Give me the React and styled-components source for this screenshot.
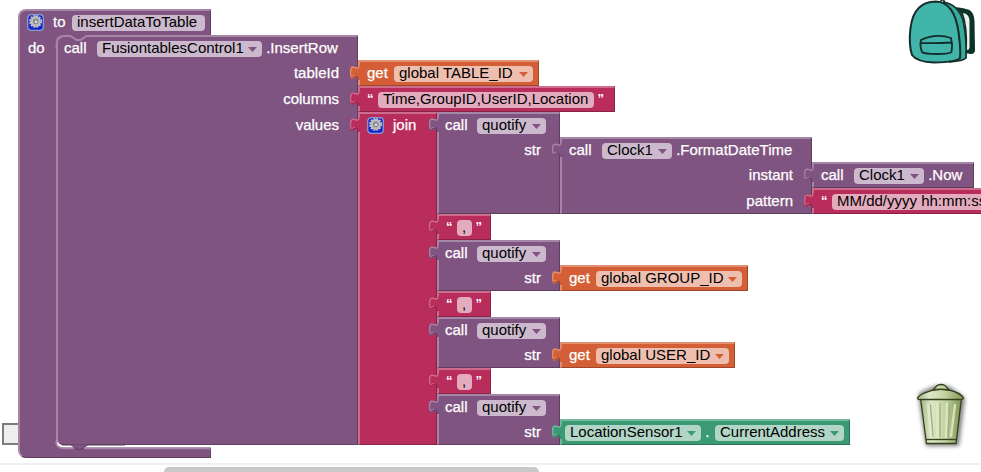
import React from 'react';
import styled, { createGlobalStyle } from 'styled-components';

const Global = createGlobalStyle`
  html, body { margin: 0; background: #fff; overflow: hidden; }
  * { box-sizing: border-box; }
`;

const TONES = {
  purple: { base: '#7f5480', light: '#a686a7', dark: '#5f3f60', pill: '#ccb9cd' },
  pink: { base: '#b82d5b', light: '#cd6c8c', dark: '#8a2244', pill: '#e3abbe' },
  orange: { base: '#d45f36', light: '#e18f72', dark: '#9f4729', pill: '#eebfaf' },
  green: { base: '#3b9974', light: '#76b89e', dark: '#2c7357', pill: '#b1d6c7' },
};

const Workspace = styled.main`
  position: relative;
  width: 981px;
  height: 472px;
  overflow: hidden;
  background: #fff;
  font: 15px/14px "Liberation Sans", Arial, sans-serif;
  color: #fff;
  white-space: pre;
`;

const Procedure = styled.section`
  position: absolute;
  left: 18px;
  top: 9px;
  display: flex;
  flex-direction: column;
`;

const ProcedureHead = styled.header`
  display: flex;
  width: 193px;
  height: 26px;
  padding: 4px 0 0 7px;
  background: ${TONES.purple.base};
  border-top: 2px solid ${TONES.purple.light};
  border-left: 2px solid ${TONES.purple.light};
  border-right: 1px solid ${TONES.purple.dark};
  border-top-left-radius: 8px;
`;

const ProcedureBody = styled.div`
  display: flex;
  height: 411px;
`;

const ProcedureSpine = styled.div`
  width: 38px;
  padding: 6px 0 0 8px;
  background: ${TONES.purple.base};
  border-left: 2px solid ${TONES.purple.light};
`;

const ProcedureFoot = styled.footer`
  width: 193px;
  height: 12px;
  background: ${TONES.purple.base};
  border-left: 2px solid ${TONES.purple.light};
  border-bottom: 1px solid ${TONES.purple.dark};
  border-right: 1px solid ${TONES.purple.dark};
  border-bottom-left-radius: 8px;
`;

const BlockBox = styled.div`
  position: relative;
  display: flex;
  flex-direction: column;
`;

const RowBox = styled.div`
  display: flex;
  flex: none;
  min-height: ${p => p.$height}px;
`;

const Cell = styled.div`
  display: flex;
  flex: none;
  justify-content: ${p => (p.$end ? 'flex-end' : 'flex-start')};
  width: ${p => p.$width}px;
  padding: ${p => (p.$first ? 4 : 6)}px ${p => (p.$end ? 18 : 0)}px 0 ${p => p.$inset || 0}px;
  background: ${p => TONES[p.$tone].base};
  border-left: 2px solid ${p => TONES[p.$tone].light};
  border-right: 1px solid ${p => TONES[p.$tone].dark};
  border-top: ${p => (p.$first ? `2px solid ${TONES[p.$tone].light}` : 'none')};
  border-bottom: ${p => (p.$last ? `1px solid ${TONES[p.$tone].dark}` : 'none')};
  border-top-left-radius: ${p => (p.$round && p.$first ? 8 : 0)}px;
  border-bottom-left-radius: ${p => (p.$round && p.$last ? 6 : 0)}px;
`;

const Inputs = styled.div`
  display: flex;
  flex-direction: column;
`;

const Label = styled.span`
  flex: none;
  width: ${p => (p.$width ? p.$width + 'px' : 'auto')};
  height: 16px;
  -webkit-text-stroke: 0.25px #fff;
`;

const Quote = styled(Label)`
  font-size: 13px;
  font-weight: bold;
  line-height: 13px;
  -webkit-text-stroke: 0;
`;

const Pill = styled.span`
  display: flex;
  flex: none;
  justify-content: space-between;
  width: ${p => p.$width}px;
  height: 16px;
  padding: 0 5px;
  border-radius: 4px;
  background: ${p => TONES[p.$tone].pill};
  color: #000;
`;

const Arrow = styled.svg`
  flex: none;
  width: 9px;
  height: 5px;
  margin-top: 6px;
  fill: ${p => TONES[p.$tone].base};
`;

const TabShape = styled.svg`
  position: absolute;
  left: -9px;
  top: 0;
  width: 12px;
  height: 24px;
`;

const Seam = styled.svg`
  position: absolute;
  left: ${p => p.$x}px;
  top: ${p => p.$y}px;
  width: ${p => p.$w}px;
  height: ${p => p.$h}px;
`;

const GearBox = styled.svg`
  flex: none;
  width: 17px;
  height: 17px;
  margin-top: -1px;
  margin-right: 9px;
`;

const Backpack = styled.svg`
  position: absolute;
  left: 904px;
  top: 0;
  width: 76px;
  height: 66px;
`;

const Trash = styled.svg`
  position: absolute;
  left: 910px;
  top: 376px;
  width: 64px;
  height: 76px;
`;

const FlyoutStub = styled.div`
  position: absolute;
  left: 2px;
  top: 423px;
  width: 24px;
  height: 22px;
  background: #eee;
  border: 2px solid #7c7c7c;
`;

const ScrollTrack = styled.div`
  position: absolute;
  left: 0;
  top: 463px;
  width: 100%;
  height: 9px;
  padding: 2px 0 0 164px;
  border-top: 2px solid #f0f0f0;
`;

const ScrollThumb = styled.div`
  width: 375px;
  height: 12px;
  border-radius: 5px;
  background: #c9c9c9;
`;

function Gear() {
  return (
    <GearBox viewBox="0 0 17 17">
      <rect x="0.7" y="0.7" width="15.6" height="15.6" rx="3.4" fill="#1424c8" stroke="#8e9cd0" strokeWidth="1.3" />
      <circle cx="8.6" cy="7.4" r="5.3" fill="#bcbdbd" />
      <circle cx="8.6" cy="7.4" r="5.7" fill="none" stroke="#c8c9c9" strokeWidth="1.5" strokeDasharray="2 .98" />
      <circle cx="8.8" cy="7.4" r="2.8" fill="#85878c" />
      <circle cx="9" cy="7.8" r="1.4" fill="#dcdce0" />
    </GearBox>
  );
}

function Tab({ tone }) {
  const t = TONES[tone];
  return (
    <TabShape viewBox="-9 0 12 24">
      <path d="M2 5H0C0 15 -8 -3 -8 12.500S0 10 0 20H2Z" fill={t.base} />
      <path d="M.8 4V6C.6 12.500 -7.400 1 -7.400 12.500" fill="none" stroke={t.light} strokeWidth="1.5" />
      <path d="M-7.500 12.500C-7.500 18.500 -5 16 -3 15.200" fill="none" stroke={t.light} strokeWidth="1.2" />
      <path d="M-5.500 17.300C-2.500 16.500 -.3 14 -.1 19.500" fill="none" stroke={t.dark} strokeWidth="1" />
    </TabShape>
  );
}

function Field({ tone, width, menu, children }) {
  return (
    <Pill $tone={tone} $width={width}>
      <span>{children}</span>
      {menu && <Arrow $tone={tone} viewBox="0 0 9 5"><path d="M0 0H9L4.5 5Z" /></Arrow>}
    </Pill>
  );
}

function Text({ value, width, field }) {
  return (
    <BlockBox>
      <RowBox $height={26}>
        <Cell $tone="pink" $first $last $width={width} $inset={7}>
          <Quote $width={11}>“</Quote>
          <Field tone="pink" width={field}>{value}</Field>
          <Quote $width={12}> ”</Quote>
        </Cell>
      </RowBox>
      <Tab tone="pink" />
    </BlockBox>
  );
}

function Getter({ name, width, field }) {
  return (
    <BlockBox>
      <RowBox $height={26}>
        <Cell $tone="orange" $first $last $width={width} $inset={7}>
          <Label $width={27}>get</Label>
          <Field tone="orange" width={field} menu>{name}</Field>
        </Cell>
      </RowBox>
      <Tab tone="orange" />
    </BlockBox>
  );
}

function Quotify({ children }) {
  return (
    <BlockBox>
      <RowBox $height={25}>
        <Cell $tone="purple" $first $width={123} $inset={6}>
          <Label $width={32}>call</Label>
          <Field tone="purple" width={69} menu>quotify</Field>
        </Cell>
      </RowBox>
      <RowBox $height={26}>
        <Cell $tone="purple" $last $end $width={123}><Label>str</Label></Cell>
        {children}
      </RowBox>
      <Tab tone="purple" />
    </BlockBox>
  );
}

function FormatDateTime() {
  return (
    <BlockBox>
      <RowBox $height={25}>
        <Cell $tone="purple" $first $width={252} $inset={7}>
          <Label $width={33}>call</Label>
          <Field tone="purple" width={70} menu>Clock1</Field>
          <Label> .FormatDateTime</Label>
        </Cell>
      </RowBox>
      <RowBox $height={26}>
        <Cell $tone="purple" $end $width={252}><Label>instant</Label></Cell>
        <BlockBox>
          <RowBox $height={26}>
            <Cell $tone="purple" $first $last $width={162} $inset={7}>
              <Label $width={33}>call</Label>
              <Field tone="purple" width={70} menu>Clock1</Field>
              <Label> .Now</Label>
            </Cell>
          </RowBox>
          <Tab tone="purple" />
        </BlockBox>
      </RowBox>
      <RowBox $height={26}>
        <Cell $tone="purple" $last $end $width={252}><Label>pattern</Label></Cell>
        <Text value="MM/dd/yyyy hh:mm:ss" width={220} field={180} />
      </RowBox>
      <Tab tone="purple" />
    </BlockBox>
  );
}

function Sensor() {
  return (
    <BlockBox>
      <RowBox $height={26}>
        <Cell $tone="green" $first $last $width={290} $inset={3}>
          <Field tone="green" width={136} menu>LocationSensor1</Field>
          <Label $width={14}> .</Label>
          <Field tone="green" width={129} menu>CurrentAddress</Field>
        </Cell>
      </RowBox>
      <Tab tone="green" />
    </BlockBox>
  );
}

function Join() {
  return (
    <BlockBox>
      <RowBox $height={333}>
        <Cell $tone="pink" $first $last $width={79} $inset={7}>
          <Gear />
          <Label>join</Label>
        </Cell>
        <Inputs>
          <Quotify><FormatDateTime /></Quotify>
          <Text value="," width={54} field={15} />
          <Quotify><Getter name="global GROUP_ID" width={188} field={146} /></Quotify>
          <Text value="," width={54} field={15} />
          <Quotify><Getter name="global USER_ID" width={175} field={133} /></Quotify>
          <Text value="," width={54} field={15} />
          <Quotify><Sensor /></Quotify>
        </Inputs>
      </RowBox>
      <Tab tone="pink" />
    </BlockBox>
  );
}

function InsertRow() {
  return (
    <BlockBox>
      <RowBox $height={25}>
        <Cell $tone="purple" $first $round $width={302} $inset={6}>
          <Label $width={33}>call</Label>
          <Field tone="purple" width={165} menu>FusiontablesControl1</Field>
          <Label> .InsertRow</Label>
        </Cell>
      </RowBox>
      <RowBox $height={26}>
        <Cell $tone="purple" $end $width={302}><Label>tableId</Label></Cell>
        <Getter name="global TABLE_ID" width={181} field={139} />
      </RowBox>
      <RowBox $height={26}>
        <Cell $tone="purple" $end $width={302}><Label>columns</Label></Cell>
        <Text value="Time,GroupID,UserID,Location" width={257} field={216} />
      </RowBox>
      <RowBox $height={333}>
        <Cell $tone="purple" $last $round $end $width={302}><Label>values</Label></Cell>
        <Join />
      </RowBox>
    </BlockBox>
  );
}

export default function App() {
  const p = TONES.purple;
  return (
    <Workspace>
      <Global />
      <FlyoutStub />
      <Procedure>
        <ProcedureHead>
          <Gear />
          <Label $width={19}>to</Label>
          <Field tone="purple" width={133}>insertDataToTable</Field>
        </ProcedureHead>
        <ProcedureBody>
          <ProcedureSpine><Label>do</Label></ProcedureSpine>
          <InsertRow />
        </ProcedureBody>
        <ProcedureFoot />
        <Seam $x={37} $y={24} $w={60} $h={16} viewBox="0 0 60 16">
          <path d="M0 14V0H60V3H31L26 7H21L17 3H9Q2 4 2 12Z" fill={p.base} />
          <path d="M1.500 16V10Q1.500 3 9 3H15.500L21.500 7H25.500L31.500 3H60" fill="none" stroke={p.light} strokeWidth="1.8" />
        </Seam>
        <Seam $x={37} $y={426} $w={156} $h={16} viewBox="0 0 156 16">
          <path d="M0 0H1V5Q1 12 7 13H156V16H0Z" fill={p.base} />
          <path d="M1.500 6Q4 10 9 10.300H156V12.500H8Q2 12 1.500 6Z" fill="#fff" />
          <path d="M16 9.500H33L26 15H22Z" fill={p.base} />
          <path d="M7 10H16L22 14.500H26L33 10H70" fill="none" stroke={p.dark} strokeWidth="1" />
          <path d="M1 6Q1 13.300 9 13.300H19M29 13.300H155" fill="none" stroke={p.light} strokeWidth="1.7" />
        </Seam>
      </Procedure>

      <Backpack viewBox="904 0 76 66">
        <path d="M941 3V0H944V4" fill="none" stroke="#10382e" strokeWidth="1.5" />
        <path d="M954 7C961 8 964 8 966 9C972 10 974 14 974.500 21L975 50Q975 54 971 54L964 53L965 46Q967 20 959 11Z" fill="#0b3327" />
        <path d="M963 13Q969 14 969.500 20L969.500 48Q969 50 967 50Q968 26 963 13Z" fill="#eef1f0" />
        <path d="M944 2Q958 5 963 20Q967 38 966 58Q963 61 950 62Z" fill="#38aa9d" stroke="#132d2a" strokeWidth="1.7" />
        <path d="M910.500 28C913 8 924 1.500 936 1.500C950 2 956 14 958.500 32Q961 50 960 58Q957 62 934 62.500Q917 62 912 55Q908.500 44 910.500 28Z" fill="#41b5aa" stroke="#132d2a" strokeWidth="2" />
        <path d="M921 40Q936 33 951 38Q953 45 951.500 52Q950 54 937 54Q924 54 922 52Q919.500 45 921 40ZM921 43Q936 43.500 952 42.500" fill="none" stroke="#132d2a" strokeWidth="1.8" />
      </Backpack>

      <Trash viewBox="910 376 64 76">
        <defs>
          <linearGradient id="can" x1="0" x2="1">
            <stop offset="0" stopColor="#a3b57d" /><stop offset=".25" stopColor="#dfe8c9" />
            <stop offset=".6" stopColor="#c3d2a0" /><stop offset="1" stopColor="#7c9452" />
          </linearGradient>
          <filter id="shadow" x="-30%" y="-30%" width="160%" height="160%"><feGaussianBlur stdDeviation="2" /></filter>
        </defs>
        <path d="M919 393L934 386H949L965 398L959 446H926L919 400Z" fill="#000" opacity=".5" filter="url(#shadow)" />
        <path d="M920.500 398H961.500L956 443.500H926.500Z" fill="url(#can)" stroke="#35401f" strokeWidth="1.3" />
        <path d="M928 405L931 436M937.500 404V437M947 404L946 437M955 405L951 436" stroke="#e2ebcd" strokeWidth="2.400" strokeLinecap="round" fill="none" opacity=".8" />
        <path d="M930.500 405L933 436M940 404V437M949.500 404L948 437" stroke="#9db178" strokeWidth="1.300" strokeLinecap="round" fill="none" />
        <path d="M926 439.500H956.500" stroke="#35401f" strokeWidth="1.3" />
        <path d="M917.500 398Q919 394 933 390Q941 388.500 949 390Q961 393 963.500 398Q962 400 960 399.500H920Q918 400 917.500 398Z" fill="url(#can)" stroke="#35401f" strokeWidth="1.3" />
        <path d="M933 390L937 385.500Q941 383.500 945 385.500L949 390Q941 388.500 933 390Z" fill="#c6d4a8" stroke="#35401f" strokeWidth="1.3" />
      </Trash>

      <ScrollTrack><ScrollThumb /></ScrollTrack>
    </Workspace>
  );
}
